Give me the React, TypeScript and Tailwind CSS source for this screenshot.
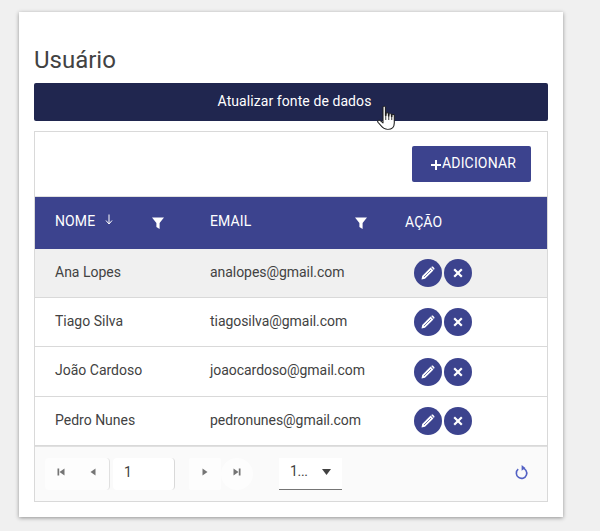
import React from "react";

const rows = [
  { n: "Ana Lopes", e: "analopes@gmail.com", bg: "bg-[#f0f0f0]", h: "h-[49px]" },
  { n: "Tiago Silva", e: "tiagosilva@gmail.com", bg: "bg-white", h: "h-[49px]" },
  { n: "João Cardoso", e: "joaocardoso@gmail.com", bg: "bg-white", h: "h-[50px]" },
  { n: "Pedro Nunes", e: "pedronunes@gmail.com", bg: "bg-white", h: "h-[49px]" },
];

function Funnel() {
  return (
    <svg width="12" height="12" viewBox="0 0 12 12" className="block">
      <path d="M0 0.5H12L7.6 6V12L4.4 10V6Z" fill="#fff" />
    </svg>
  );
}

function Pencil() {
  return (
    <svg width="14" height="14" viewBox="0 0 14 14">
      <path d="M0.5 13.5L1.2 10L9.6 1.6L12.4 4.4L4 12.8Z" fill="#fff" />
      <path d="M10.4 0.9C11 0.3 11.6 0.3 12.1 0.8L13.2 1.9C13.7 2.4 13.7 3 13.1 3.6L12.9 3.9L10.1 1.1Z" fill="#fff" />
      <path d="M3 11L10 4" stroke="#3c438e" strokeWidth="0.7" />
    </svg>
  );
}

function Cross() {
  return (
    <svg width="10" height="10" viewBox="0 0 10 10">
      <path d="M1.2 1.2L8.8 8.8M8.8 1.2L1.2 8.8" stroke="#fff" strokeWidth="2.2" />
    </svg>
  );
}

function Round({ children }: { children: React.ReactNode }) {
  return (
    <span className="flex h-7 w-7 items-center justify-center rounded-full bg-[#3c438e]">{children}</span>
  );
}

function PagerIcon({ kind }: { kind: "first" | "prev" | "next" | "last" }) {
  const d = {
    first: "M0.5 0.5H2.2V7.5H0.5ZM7.5 0.5V7.5L2.5 4Z",
    prev: "M6.5 0.5V7.5L1.5 4Z",
    next: "M1.5 0.5V7.5L6.5 4Z",
    last: "M0.5 0.5V7.5L5.5 4ZM5.8 0.5H7.5V7.5H5.8Z",
  }[kind];
  return (
    <svg width="8" height="8" viewBox="0 0 8 8" className="block">
      <path d={d} fill="#757575" />
    </svg>
  );
}

function Hand() {
  return (
    <svg
      width="18"
      height="25"
      viewBox="0 0 15 25"
      preserveAspectRatio="none"
      className="absolute left-[377px] top-[105px]"
    >
      <path
        d="M5 2.2C5 0.8 7 0.8 7 2.2V10.5H7.6V8.6C7.6 7.4 9.5 7.4 9.5 8.6V11H10V9.4C10 8.3 12 8.3 12 9.4V11.5H12.5V10.3C12.5 9.2 14.4 9.2 14.4 10.3V18C14.4 21.8 12.4 24.4 9 24.4C6 24.4 4.6 22.8 3.2 20.6L0.8 17.2C0 15.8 1.6 14.6 2.8 15.6L5 18Z"
        fill="#fff"
        stroke="#1c1c1c"
        strokeWidth="0.9"
        strokeLinejoin="round"
      />
      <path d="M7.3 11V15M9.8 11V15M12.3 11V15" stroke="#1c1c1c" strokeWidth="0.8" />
    </svg>
  );
}

export default function App() {
  return (
    <div className="relative h-[531px] w-[600px] overflow-hidden bg-[#f0f0f0] pl-[19px] pt-3 text-[14px] [font-family:Roboto,sans-serif]">
      <div className="h-[505px] w-[544px] bg-white px-[15px] pt-[34px] shadow-[0_1px_4px_rgba(0,0,0,0.4)]">
        <h1 className="h-[37px] text-[24px] font-normal leading-[28px] text-[#424242]">Usuário</h1>
        <button className="flex h-[38px] w-[514px] items-center justify-center rounded-[2px] bg-[#20264f] pb-[2px] pl-[7px] text-[14px] font-normal tracking-[0.08px] text-white">
          Atualizar fonte de dados
        </button>

        <div className="mt-[10px] w-[514px] border border-[#d9d9d9]">
          <div className="flex h-[64px] items-start justify-end pr-4 pt-[14px]">
            <button className="flex h-9 w-[119px] items-center justify-center rounded-[2px] bg-[#3c438e] pb-[2px] pl-[4px] text-[14px] font-normal tracking-[0.15px] text-white">
              <svg width="10" height="10" viewBox="0 0 10 10" className="mr-[1px] mt-[4px]">
                <path d="M4 0H6V4H10V6H6V10H4V6H0V4H4Z" fill="#fff" />
              </svg>
              ADICIONAR
            </button>
          </div>

          <div className="flex h-[53px] items-center border-t border-[#e0e0e0] bg-[#3c438e] text-[14px] font-normal tracking-[0.1px] text-white">
            <div className="flex w-[175px] items-center pl-5 pb-[4px]">
              <span className="w-[40px]">NOME</span>
              <svg width="8" height="11" viewBox="0 0 8 11" className="ml-[10px] mb-[3px]">
                <path d="M4 0.5V9M1 6.5L4 10L7 6.5" stroke="#fff" strokeWidth="1" fill="none" />
              </svg>
              <span className="ml-[39px] mt-[3px]">
                <Funnel />
              </span>
            </div>
            <div className="flex w-[195px] items-center pb-[4px]">
              <span className="w-[41px]">EMAIL</span>
              <span className="ml-[104px] mt-[3px]">
                <Funnel />
              </span>
            </div>
            <div className="pb-[1px]">AÇÃO</div>
          </div>

          {rows.map((r) => (
            <div
              key={r.n}
              className={`flex items-center border-b border-[#d9d9d9] text-[#424242] ${r.bg} ${r.h}`}
            >
              <div className="w-[175px] pb-[2px] pl-5">{r.n}</div>
              <div className="w-[204px] pb-[2px] tracking-[-0.05px]">{r.e}</div>
              <div className="flex gap-[2px]">
                <Round>
                  <Pencil />
                </Round>
                <Round>
                  <Cross />
                </Round>
              </div>
            </div>
          ))}

          <div className="flex h-[55px] items-center border-t border-[#e0e0e0] bg-[#fafafa] pb-[1px] pl-[10px] pr-[18px]">
            <div className="flex h-8 w-[65px] items-center rounded-[4px] border-r border-[#e0e0e0] bg-[#fdfdfd] pb-[3px] pl-[12px]">
              <PagerIcon kind="first" />
              <span className="ml-6">
                <PagerIcon kind="prev" />
              </span>
            </div>
            <div className="ml-[3px] flex h-8 w-[62px] items-center rounded-[4px] border-r border-[#d9d9d9] bg-white pb-[3px] pl-[11px] text-[14px] text-[#424242]">
              1
            </div>
            <div className="ml-[14px] flex h-8 w-8 items-center justify-center rounded-[2px] bg-[#fdfdfd] pb-[3px]">
              <PagerIcon kind="next" />
            </div>
            <div className="flex h-8 w-8 items-center justify-center rounded-full bg-[#fdfdfd] pb-[3px]">
              <PagerIcon kind="last" />
            </div>
            <div className="ml-[26px] flex h-8 w-[63px] items-center border-b border-[#757575] bg-white pb-[2px] pl-[11px] text-[14px] text-[#424242]">
              <span className="w-[17px] pb-[1px] tracking-[-0.3px]">1...</span>
              <svg width="9" height="6" viewBox="0 0 9 6" className="ml-[15px]">
                <path d="M0 0H9L4.5 6Z" fill="#424242" />
              </svg>
            </div>
            <svg width="14" height="15" viewBox="0 0 14 15" className="mb-[3px] ml-auto">
              <path
                d="M3.2 4.2A5.2 5.2 0 1 0 7 3"
                stroke="#5361c4"
                strokeWidth="1.6"
                fill="none"
              />
              <path d="M6.6 0V5.8L10.4 3Z" fill="#5361c4" />
            </svg>
          </div>
        </div>
      </div>
      <Hand />
    </div>
  );
}
